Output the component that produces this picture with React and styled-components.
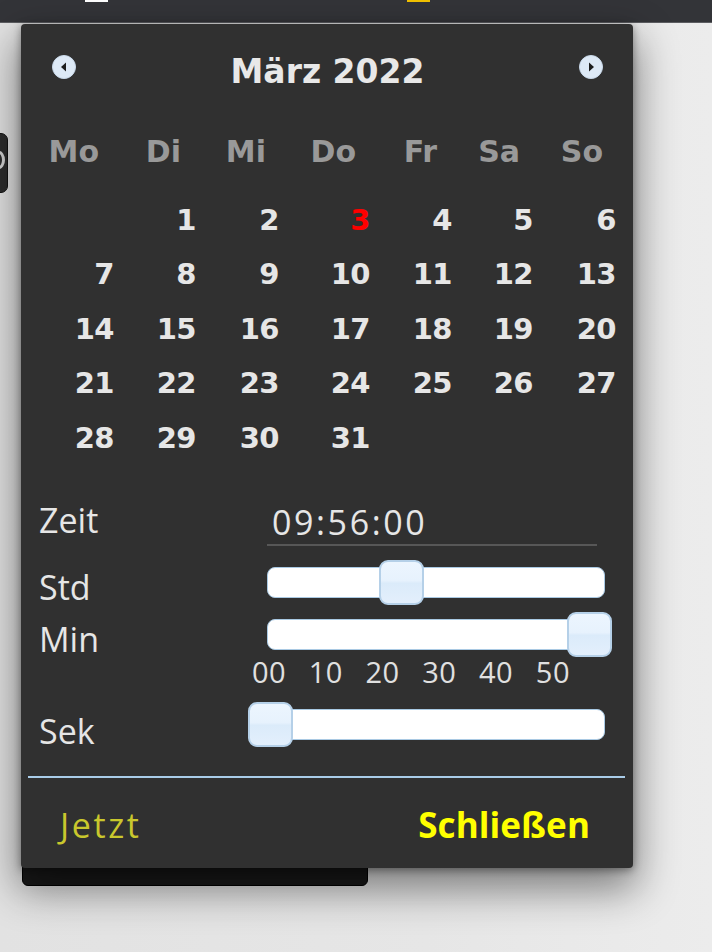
import React from 'react'
import styled, { createGlobalStyle } from 'styled-components'

const GlobalStyle = createGlobalStyle`
  html, body { margin: 0; padding: 0; }
  body {
    background: #e6e6e6;
    font-family: "DejaVu Sans", sans-serif;
  }
`

const Page = styled.div`
  position: relative;
  width: 712px;
  height: 952px;
  overflow: hidden;
  background: linear-gradient(90deg, #e2e2e2 0%, #e6e6e6 60%, #ececec 100%);
`

const TopBar = styled.div`
  height: 22px;
  background: #333438;
  border-bottom: 1px solid #5c5d61;
  position: relative;
`

const BarIcon = styled.span`
  position: absolute;
  top: 0;
  left: ${p => p.$x}px;
  width: 23px;
  height: 2px;
  background: ${p => p.$color};
`

const Content = styled.div`
  display: flex;
  align-items: flex-start;
`

// edge of a text field that sits mostly off-screen
const InputStub = styled.div`
  position: relative;
  width: 60px;
  height: 60px;
  margin: 110px 0 0 -52px;
  background: #2c2c2c;
  border: 1px solid #111;
  border-radius: 7px;
  box-sizing: border-box;

  &::after {
    content: "";
    position: absolute;
    right: 2px;
    top: 17px;
    width: 12px;
    height: 18px;
    border: 3px solid #d0d0d0;
    border-radius: 50%;
    box-sizing: border-box;
  }
`

const DarkCard = styled.div`
  width: 346px;
  height: 802px;
  margin: 61px 0 0 14px;
  background: #1a1a1a;
  border: 1px solid #000;
  border-radius: 6px;
  box-sizing: border-box;
`

const Popup = styled.div`
  position: absolute;
  top: 24px;
  left: 21px;
  width: 612px;
  height: 844px;
  box-sizing: border-box;
  background: #303030;
  border-radius: 4px;
  box-shadow: 0 18px 40px 4px rgba(0, 0, 0, 0.45), 0 2px 8px rgba(0, 0, 0, 0.4);
  display: flex;
  flex-direction: column;
`

const Header = styled.div`
  display: flex;
  align-items: center;
  justify-content: space-between;
  height: 40px;
  margin-top: 27.6px;
  padding: 0 30px 0 31px;
`

const NavButton = styled.button`
  width: 24px;
  height: 24px;
  margin-bottom: 10px;
  padding: 0;
  border: 1px solid #c9d9ea;
  border-radius: 50%;
  background: #dde9f6;
  display: flex;
  align-items: center;
  justify-content: center;
  cursor: pointer;
`

const Title = styled.div`
  font: bold 33px/40px "DejaVu Sans", sans-serif;
  color: #e8e8e8;
`

const DayGrid = styled.div`
  display: grid;
  grid-template-columns: 82px 82px 83px 91px 82px 81px 83px;
  grid-auto-rows: ${p => p.$row}px;
  margin-top: ${p => p.$top}px;
  padding-left: 11px;
`

const WeekDay = styled.div`
  font: bold 30px/40px "DejaVu Sans", sans-serif;
  color: #999999;
  text-align: right;
  padding-right: ${p => p.$pad}px;
`

const Day = styled.div`
  font: bold 29px/54.5px "DejaVu Sans", sans-serif;
  letter-spacing: -0.5px;
  color: ${p => (p.$today ? '#ff0000' : '#e6e6e6')};
  text-align: right;
`

const TimeGrid = styled.div`
  display: grid;
  grid-template-columns: 228px 338px;
  margin-top: 31px;
  padding-left: 18px;
`

const Label = styled.div`
  font: 34px/40px "Open Sans", sans-serif;
  color: #e6e6e6;
  margin-top: ${p => p.$top}px;
  height: ${p => p.$h}px;
`

const Cell = styled.div`
  height: ${p => p.$h}px;
  display: flex;
  align-items: ${p => p.$align || 'center'};
`

const TimeValue = styled.div`
  width: 330px;
  height: 44px;
  margin-top: 6px;
  box-sizing: border-box;
  padding-left: 5px;
  border-bottom: 2px solid #575757;
  font: 34px/40px "Open Sans", sans-serif;
  letter-spacing: 2.6px;
  color: #e6e6e6;
`

const Track = styled.div`
  position: relative;
  width: 338px;
  height: 31px;
  box-sizing: border-box;
  background: #ffffff;
  border: 1px solid #a9c9e3;
  border-radius: 8px;
`

const Handle = styled.span`
  position: absolute;
  top: -8px;
  width: 45px;
  height: 45px;
  box-sizing: border-box;
  border: 2px solid #b5d0e8;
  border-radius: 9px;
  background: linear-gradient(#ecf5fe 0%, #e7f2fd 45%, #dbebfa 52%, #e3effc 100%);
`

const Ticks = styled.div`
  position: relative;
  width: 338px;
  height: 24px;
`

const Tick = styled.span`
  position: absolute;
  top: 0;
  transform: translateX(-50%);
  font: 29px/24px "Open Sans", sans-serif;
  letter-spacing: 0.5px;
  color: #e0e0e0;
`

const Separator = styled.div`
  height: 2px;
  margin: 11px 8px 0 7px;
  background: #a9cce8;
`

const Footer = styled.div`
  display: flex;
  justify-content: space-between;
  padding: 27px 43px 0 39px;
`

const FooterButton = styled.button`
  background: none;
  border: 0;
  padding: 0;
  cursor: pointer;
  font-family: "Open Sans", sans-serif;
  font-size: ${p => (p.$primary ? 35 : 34)}px;
  line-height: 40px;
  font-weight: ${p => (p.$primary ? 700 : 400)};
  letter-spacing: ${p => (p.$primary ? '0.1px' : '2.6px')};
  color: ${p => (p.$primary ? '#ffff00' : '#c9c72d')};
`

const Arrow = ({ dir }) => (
  <svg width="12" height="12" viewBox="0 0 12 12">
    {dir === 'left'
      ? <path d="M3 6 L8 1.5 L8 10.5 Z" fill="#1d1d1d" />
      : <path d="M9 6 L4 1.5 L4 10.5 Z" fill="#1d1d1d" />}
  </svg>
)

const Slider = ({ value, max }) => {
  const pct = (value / max) * 100
  return (
    <Track>
      <Handle style={{ left: `calc(${pct}% - 20px)` }} />
    </Track>
  )
}

const weekDays = [
  ['Mo', 15], ['Di', 15], ['Mi', 13], ['Do', 14], ['Fr', 15], ['Sa', 13], ['So', 13],
]
const days = [null, ...Array.from({ length: 31 }, (_, i) => i + 1)]

export default function App() {
  return (
    <Page>
      <GlobalStyle />
      <TopBar>
        <BarIcon $x={85} $color="#ffffff" />
        <BarIcon $x={407} $color="#f2c200" />
      </TopBar>
      <Content>
        <InputStub />
        <DarkCard />
      </Content>

      <Popup>
        <Header>
          <NavButton title="Zurück"><Arrow dir="left" /></NavButton>
          <Title>März 2022</Title>
          <NavButton title="Vor"><Arrow dir="right" /></NavButton>
        </Header>

        <DayGrid $row={40} $top={40}>
          {weekDays.map(([d, pad]) => <WeekDay key={d} $pad={pad}>{d}</WeekDay>)}
        </DayGrid>

        <DayGrid $row={54.5} $top={21}>
          {days.map((d, i) => (
            <Day key={i} $today={d === 3}>{d}</Day>
          ))}
        </DayGrid>

        <TimeGrid>
          <Label $top={4} $h={56}>Zeit</Label>
          <Cell $h={60} $align="flex-start"><TimeValue>09:56:00</TimeValue></Cell>

          <Label $top={11} $h={41}>Std</Label>
          <Cell $h={52}><Slider value={9} max={23} /></Cell>

          <Label $top={11} $h={41}>Min</Label>
          <Cell $h={52}><Slider value={56} max={59} /></Cell>

          <div />
          <Cell $h={24}>
            <Ticks>
              {[0, 10, 20, 30, 40, 50].map(t => (
                <Tick key={t} style={{ left: `calc(${(t / 59) * 335}px + 2px)` }}>
                  {String(t).padStart(2, '0')}
                </Tick>
              ))}
            </Ticks>
          </Cell>

          <Label $top={27} $h={54}>Sek</Label>
          <Cell $h={81}><Slider value={0} max={59} /></Cell>
        </TimeGrid>

        <Separator />

        <Footer>
          <FooterButton>Jetzt</FooterButton>
          <FooterButton $primary>Schließen</FooterButton>
        </Footer>
      </Popup>
    </Page>
  )
}
